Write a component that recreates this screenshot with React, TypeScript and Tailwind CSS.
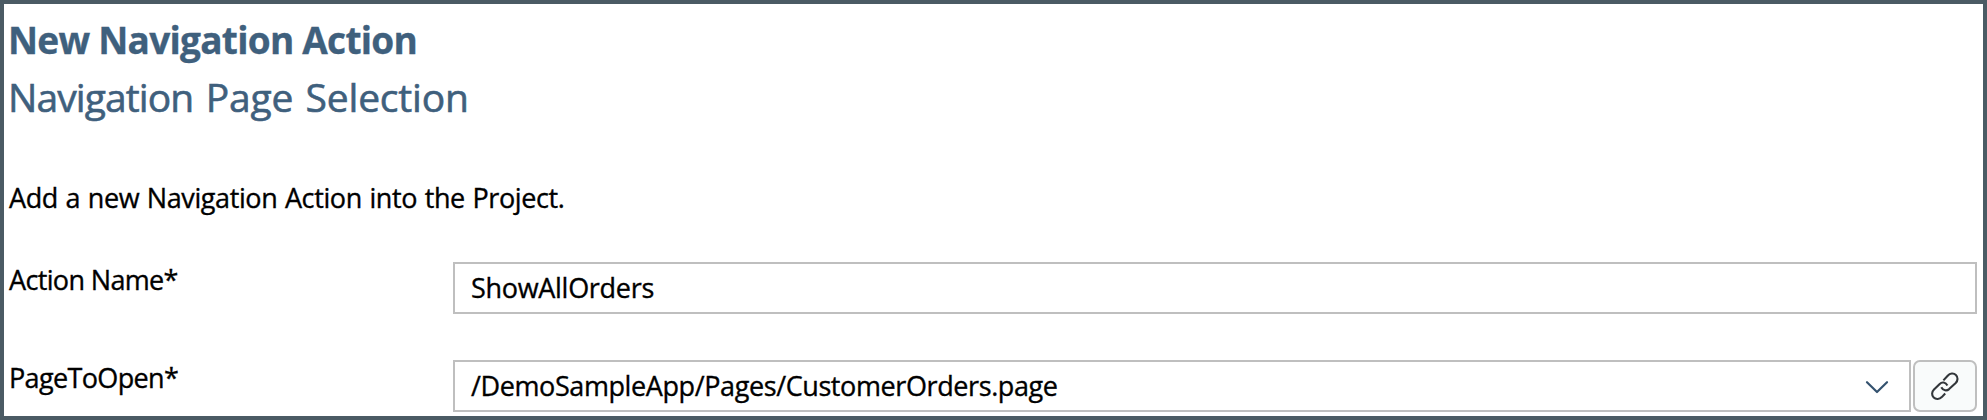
function LinkIcon() {
  return (
    <svg width="30" height="30" viewBox="0 0 30 30" fill="none" stroke="#32363a" strokeWidth="2.1" strokeLinecap="butt" strokeLinejoin="round">
      <path d="M13.4 9.4 L17.7 4.7 C20 2.1 23.6 1.7 25.9 3.9 C28.2 6.1 28 9.6 25.7 12 L19.1 18.1 C16.8 20.1 13.2 19.8 11.3 16.2" />
      <path d="M17.4 14.6 C15.6 11.1 12 10.6 9.7 12.9 L4 18.5 C1.7 20.8 1.4 24.3 3.7 26.6 C5.9 28.8 9.5 28.4 11.8 26.1 L15.2 22.5" />
    </svg>
  );
}

export default function App() {
  return (
    <main className="flex h-[420px] w-[1987px] flex-col overflow-hidden border-4 border-[#4b5b64] bg-white pr-[6px] pl-[4px] font-['Open_Sans',sans-serif] text-[27px] leading-10 text-black [-webkit-text-stroke:0.35px_currentColor]">
      <h1 className="mt-[7px] h-[57px] text-[37px] leading-[58px] font-bold tracking-[-0.74px] text-[#3f607d]">New Navigation Action</h1>
      <h2 className="h-[58px] text-[39px] leading-[58px] tracking-[-0.2px] text-[#3f607d] [-webkit-text-stroke:0.6px_currentColor] [word-spacing:2.5px]">
        <span className="tracking-[-0.9px]">Navigation</span> Page Selection
      </h2>
      <p className="mt-[52px] pl-px tracking-[-0.4px] [word-spacing:1px]">Add a new Navigation Action into the Project.</p>

      <div className="mt-[41px] flex h-[55px]">
        <label htmlFor="action-name" className="w-[445px] shrink-0 pt-px pl-px tracking-[-0.65px]">Action Name*</label>
        <input id="action-name" defaultValue="ShowAllOrders" className="mt-[3px] h-[52px] min-w-0 grow border-2 border-[#bfbfbf] px-4 pb-[2px] tracking-[-0.3px] outline-none" />
      </div>

      <div className="mt-[43px] flex h-[55px]">
        <span className="w-[445px] shrink-0 pt-px pl-px tracking-[-0.65px]">PageToOpen*</span>
        <div className="mt-[3px] flex h-[52px] min-w-0 grow items-center justify-between border-2 border-[#bfbfbf] pr-[20px] pl-4">
          <span className="tracking-[-0.4px]">/DemoSampleApp/Pages/CustomerOrders.page</span>
          <svg width="24" height="14" viewBox="0 0 24 14" fill="none" stroke="#34526f" strokeWidth="2.2" strokeLinecap="round" strokeLinejoin="round" className="mt-0.5">
            <path d="M2 2.2 L12 12 L22 2.2" />
          </svg>
        </div>
        <button aria-label="Browse pages" className="mt-[3px] ml-[2px] flex h-[52px] w-16 shrink-0 items-center justify-center rounded-[7px] border-2 border-[#bfbfbf] bg-[#f9fbfb]">
          <LinkIcon />
        </button>
      </div>
    </main>
  );
}
